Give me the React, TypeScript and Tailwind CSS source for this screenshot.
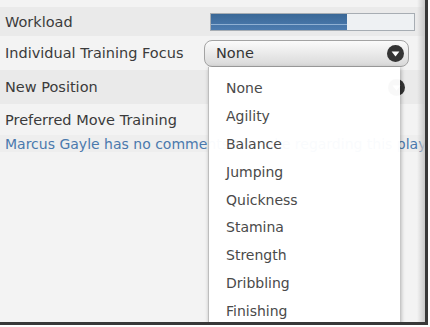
import { useState } from 'react'

const OPTIONS = [
  'None',
  'Agility',
  'Balance',
  'Jumping',
  'Quickness',
  'Stamina',
  'Strength',
  'Dribbling',
  'Finishing',
  'Passing',
]

function SelectIcon() {
  return (
    <svg width="17" height="17" viewBox="0 0 17 17" aria-hidden="true">
      <circle cx="8.5" cy="8.5" r="8.5" fill="#343434" />
      <path d="M4.6 6.6 L12.4 6.6 L8.5 11.4 Z" fill="#ffffff" />
    </svg>
  )
}

function WorkloadBar({ value }: { value: number }) {
  return (
    <div className="h-[18px] w-[205px] border border-[#a7adb3] bg-[#eef1f3]">
      <div
        className="relative h-full bg-gradient-to-b from-[#3a6897] to-[#4d7cb0]"
        style={{ width: `${value}%` }}
      >
        {/* glossy line across the fill */}
        <div className="absolute inset-x-0 top-[10px] h-px bg-[#8fb0d3]" />
      </div>
    </div>
  )
}

function Row({
  label,
  shaded,
  className,
  children,
}: {
  label: string
  shaded?: boolean
  className?: string
  children?: React.ReactNode
}) {
  return (
    <div
      className={`flex items-center pl-[5px] ${shaded ? 'bg-[#eaeaea]' : ''} ${className ?? ''}`}
    >
      <span className="w-[199px] shrink-0 pt-[2px] text-[14.5px] text-[#3b3b3b]">{label}</span>
      {children}
    </div>
  )
}

export default function App() {
  const [focus] = useState('None')

  return (
    <div className="h-[327px] w-[430px] overflow-hidden bg-white">
      <div
        className="relative h-[325px] w-[428px] overflow-hidden border-b-[3px] border-r-[3px] border-[#383838] bg-[#f3f3f3]"
        style={{ fontFamily: '"DejaVu Sans", Verdana, sans-serif' }}
      >
        {/* shadow inside the right edge */}
        <div className="pointer-events-none absolute inset-y-0 right-0 w-[8px] bg-gradient-to-r from-transparent to-[#c8c8c8]" />

        <div className="h-[7px]" />

        <Row label="Workload" shaded className="h-[29px]">
          <div className="pl-[6px]">
            <WorkloadBar value={67} />
          </div>
        </Row>

        <Row label="Individual Training Focus" className="h-[34px]">
          <button className="flex h-[27px] w-[205px] items-center justify-between rounded-[8px] border border-[#a3a3a3] bg-gradient-to-b from-[#fbfbfb] to-[#d9d9d9] pl-[11px] pr-[4px] text-[14.5px] text-[#333]">
            <span className="pt-[2px]">{focus}</span>
            <SelectIcon />
          </button>
        </Row>

        <Row label="New Position" shaded className="h-[34px]">
          <div className="flex w-[205px] justify-end pr-[4px]">
            <SelectIcon />
          </div>
        </Row>

        <Row label="Preferred Move Training" className="h-[31px]" />

        <div className="flex h-[17px] items-center whitespace-nowrap bg-[#eeeeee] pl-[5px] pt-[1px] text-[14px] text-[#4a79ad]">
          Marcus Gayle has no comments to make regarding this player
        </div>

        {/* open options list of the training focus select */}
        <div className="absolute left-[208px] top-[67px] w-[192px] border-l border-[#bdbdbd] bg-white/[0.97] pt-[7px] shadow-[1px_1px_4px_rgba(0,0,0,0.3)]">
          {OPTIONS.map((o) => (
            <div key={o} className="flex h-[27.9px] items-center pl-[17px] pt-[1px] text-[14px] text-[#4a4a4a]">
              {o}
            </div>
          ))}
        </div>
      </div>
    </div>
  )
}
